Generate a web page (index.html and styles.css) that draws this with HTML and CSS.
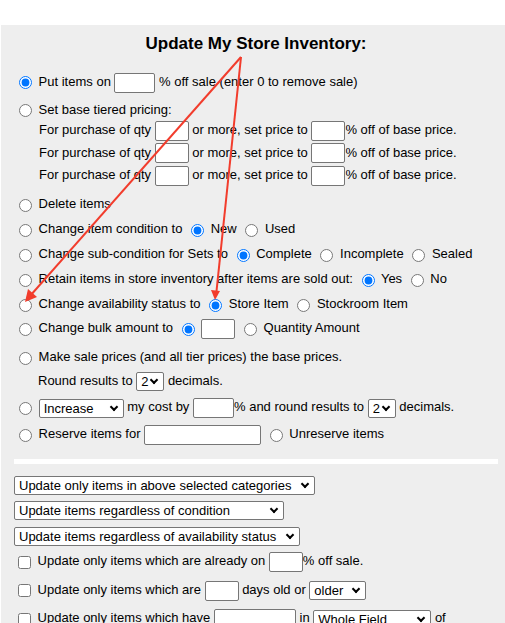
FILE: index.html
```html
<!DOCTYPE html>
<html lang="en">
<head>
    <meta charset="UTF-8">
    <meta name="viewport" content="width=device-width, initial-scale=1.0">
    <title>Update My Store Inventory</title>
    <link rel="stylesheet" href="styles.css">
</head>
<body>
    <div class="panel">
        <h1>Update My Store Inventory:</h1>

        <!-- Actions -->
        <div class="row r-sale">
            <span class="line"><input type="radio" name="act" checked> Put items on <input type="text" class="w41"> % off sale (enter 0 to remove sale)</span>
        </div>

        <div class="tiers">
            <div class="tier-title"><span class="line"><input type="radio" name="act"> Set base tiered pricing:</span></div>
            <div class="tier">For purchase of qty <input type="text" class="w34"> or more, set price to <input type="text" class="w34">% off of base price.</div>
            <div class="tier">For purchase of qty <input type="text" class="w34"> or more, set price to <input type="text" class="w34">% off of base price.</div>
            <div class="tier">For purchase of qty <input type="text" class="w34"> or more, set price to <input type="text" class="w34">% off of base price.</div>
        </div>

        <div class="row r-delete">
            <span class="line"><input type="radio" name="act"> Delete items</span>
        </div>
        <div class="row">
            <span class="line"><input type="radio" name="act"> Change item condition to <input type="radio" name="cond" checked> New <input type="radio" name="cond"> Used</span>
        </div>
        <div class="row">
            <span class="line"><input type="radio" name="act"> Change sub-condition for Sets to <input type="radio" name="sub" checked> Complete <input type="radio" name="sub"> Incomplete <input type="radio" name="sub"> Sealed</span>
        </div>
        <div class="row">
            <span class="line"><input type="radio" name="act"> Retain items in store inventory after items are sold out: <input type="radio" name="ret" checked> Yes <input type="radio" name="ret"> No</span>
        </div>
        <div class="row">
            <span class="line"><input type="radio" name="act"> Change availability status to <input type="radio" name="avail" checked> Store Item <input type="radio" name="avail"> Stockroom Item</span>
        </div>
        <div class="row">
            <span class="line"><input type="radio" name="act"> Change bulk amount to <input type="radio" name="bulk" checked> <input type="text" class="w34"> <input type="radio" name="bulk"> Quantity Amount</span>
        </div>

        <div class="row r-base">
            <span class="line"><input type="radio" name="act"> Make sale prices (and all tier prices) the base prices.</span>
        </div>
        <div class="row r-round">
            <span class="line indent">Round results to <span class="sel w28"><select><option>2</option></select></span> decimals.</span>
        </div>
        <div class="row r-cost">
            <span class="line"><input type="radio" name="act"> <span class="sel w85"><select><option>Increase</option><option>Decrease</option></select></span> my cost by <input type="text" class="w41">% and round results to <span class="sel w28"><select><option>2</option></select></span> decimals.</span>
        </div>
        <div class="row r-reserve">
            <span class="line"><input type="radio" name="act"> Reserve items for <input type="text" class="w117"> <input type="radio" name="act"> Unreserve items</span>
        </div>

        <div class="divider"></div>

        <!-- Filters -->
        <div class="filter f1"><span class="sel w301"><select><option>Update only items in above selected categories</option></select></span></div>
        <div class="filter f2"><span class="sel w270"><select><option>Update items regardless of condition</option></select></span></div>
        <div class="filter f3"><span class="sel w286"><select><option>Update items regardless of availability status</option></select></span></div>

        <div class="row c1">
            <span class="line"><input type="checkbox"> Update only items which are already on <input type="text" class="w34">% off sale.</span>
        </div>
        <div class="row c2">
            <span class="line"><input type="checkbox"> Update only items which are <input type="text" class="w34"> days old or <span class="sel w57"><select><option>older</option><option>newer</option></select></span></span>
        </div>
        <div class="row c3">
            <span class="line"><input type="checkbox"> Update only items which have <input type="text" class="w82"> in <span class="sel w118"><select><option>Whole Field</option></select></span> of</span>
        </div>
    </div>

    <!-- Annotation arrows -->
    <svg class="arrows" width="505" height="623" viewBox="0 0 505 623">
        <line x1="241" y1="57" x2="30" y2="296" />
        <polygon points="25,302 28,289 37,297" />
        <line x1="241" y1="57" x2="216" y2="296" />
        <polygon points="215,300 211,290 220,291" />
    </svg>
</body>
</html>
```

FILE: styles.css
```css
body {
    margin: 0;
    font-family: "Liberation Sans", Arial, sans-serif;
    font-size: 13px;
    color: #000;
    background: #fff;
}

.panel {
    margin: 25px 0 0 1px;
    padding: 9px 7px 30px 13px;
    background-color: #eeeeee;
}

h1 {
    margin: 0 0 17px;
    font-size: 17px;
    line-height: 19px;
    text-align: center;
}

.row {
    display: flex;
    align-items: center;
    height: 25px;
}

.line {
    white-space: nowrap;
}

.indent {
    padding-left: 24px;
}

input, select {
    vertical-align: middle;
    font-family: "Liberation Sans", Arial, sans-serif;
    font-size: 13px;
}

input[type="radio"] {
    width: 13px;
    height: 13px;
    margin: 0 3px 0 5px;
}

input[type="checkbox"] {
    width: 13px;
    height: 13px;
    margin: 0 3px 0 4px;
}

input[type="text"] {
    box-sizing: border-box;
    height: 20px;
    margin: 0;
    padding: 1px 2px;
    border: 1px solid #767676;
    border-radius: 2px;
    background: #fff;
}

/* dropdowns with a drawn chevron */
.sel {
    position: relative;
    display: inline-block;
    vertical-align: middle;
    height: 19px;
}

.sel select {
    display: block;
    box-sizing: border-box;
    width: 100%;
    height: 19px;
    margin: 0;
    padding: 0 14px 0 4px;
    border: 1px solid #767676;
    border-radius: 2px;
    background: #fff;
    color: #000;
    appearance: none;
    -webkit-appearance: none;
}

.sel::after {
    content: "";
    position: absolute;
    right: 7px;
    top: 5px;
    width: 4px;
    height: 4px;
    border-right: 2px solid #000;
    border-bottom: 2px solid #000;
    transform: rotate(45deg);
    pointer-events: none;
}

.w28 { width: 28px; }
.w34 { width: 34px; }
.w41 { width: 41px; }
.w57 { width: 57px; }
.w82 { width: 82px; }
.w85 { width: 85px; }
.w117 { width: 117px; }
.w118 { width: 118px; }
.w270 { width: 270px; }
.w286 { width: 286px; }
.w301 { width: 301px; }

/* tiered pricing block */
.tiers {
    margin-top: 5px;
}

.tier-title {
    display: flex;
    align-items: center;
    height: 19px;
}

.tier {
    height: 22.5px;
    line-height: 22.5px;
    padding-left: 25px;
    white-space: nowrap;
}

.r-delete { margin-top: 5px; }
.r-base { margin-top: 3px; }
.r-round { height: 24px; }
.r-cost { margin-top: 2px; }
.r-reserve { margin-top: 2px; }

.divider {
    height: 5px;
    margin-top: 11px;
    background: #fff;
}

.filter {
    height: 19px;
}

.f1 { margin-top: 12px; }
.f2 { margin-top: 6px; }
.f3 { margin-top: 7px; }

.c1 { margin-top: 3px; height: 27px; }
.c2 { height: 30px; }
.c3 { height: 27px; }

.arrows {
    position: absolute;
    top: 0;
    left: 0;
    pointer-events: none;
}

.arrows line {
    stroke: #f23c2c;
    stroke-width: 2;
}

.arrows polygon {
    fill: #f23c2c;
}
```
